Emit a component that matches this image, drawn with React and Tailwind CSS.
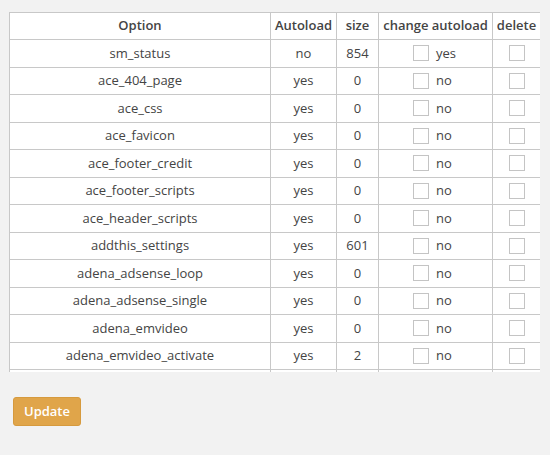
import React from "react";

const rows = [
  ["sm_status", "no", "854", "yes"],
  ["ace_404_page", "yes", "0", "no"],
  ["ace_css", "yes", "0", "no"],
  ["ace_favicon", "yes", "0", "no"],
  ["ace_footer_credit", "yes", "0", "no"],
  ["ace_footer_scripts", "yes", "0", "no"],
  ["ace_header_scripts", "yes", "0", "no"],
  ["addthis_settings", "yes", "601", "no"],
  ["adena_adsense_loop", "yes", "0", "no"],
  ["adena_adsense_single", "yes", "0", "no"],
  ["adena_emvideo", "yes", "0", "no"],
  ["adena_emvideo_activate", "yes", "2", "no"],
  ["adena_other", "yes", "0", "no"],
];

const Box = () => (
  <span className="block w-[16px] h-[16px] border border-[#c4c4c4] bg-white" />
);

export default function App() {
  return (
    <div className="w-[550px] h-[455px] bg-[#f2f2f2] pt-3 pl-[9px] text-[13px] text-[#444]" style={{ fontFamily: '"Open Sans", sans-serif' }}>
      <div className="w-[531px] h-[360px] overflow-hidden">
        <table className="table-fixed border-collapse bg-white w-[531px]">
          <colgroup>
            <col className="w-[261px]" />
            <col className="w-[66px]" />
            <col className="w-[42px]" />
            <col className="w-[114px]" />
            <col className="w-[48px]" />
          </colgroup>
          <thead>
            <tr className="h-[27px]">
              {["Option", "Autoload", "size", "change autoload", "delete"].map((h) => (
                <th key={h} className="border border-[#c8c8c8] font-semibold text-center px-0 whitespace-nowrap">{h}</th>
              ))}
            </tr>
          </thead>
          <tbody>
            {rows.map((r) => (
              <tr key={r[0]} className="h-[27.5px]">
                <td className="border border-[#c8c8c8] text-center">{r[0]}</td>
                <td className="border border-[#c8c8c8] text-center">{r[1]}</td>
                <td className="border border-[#c8c8c8] text-center">{r[2]}</td>
                <td className="border border-[#c8c8c8]">
                  <div className="flex items-center justify-center gap-[7px]">
                    <Box />
                    <span className="w-[22px]">{r[3]}</span>
                  </div>
                </td>
                <td className="border border-[#c8c8c8]">
                  <div className="flex justify-center"><Box /></div>
                </td>
              </tr>
            ))}
          </tbody>
        </table>
      </div>
      <button className="mt-[25px] ml-1 w-[68px] h-[29px] rounded-[3px] bg-[#e0a54a] text-white text-[13px] font-semibold border border-[#d69a3e]">
        Update
      </button>
    </div>
  );
}
